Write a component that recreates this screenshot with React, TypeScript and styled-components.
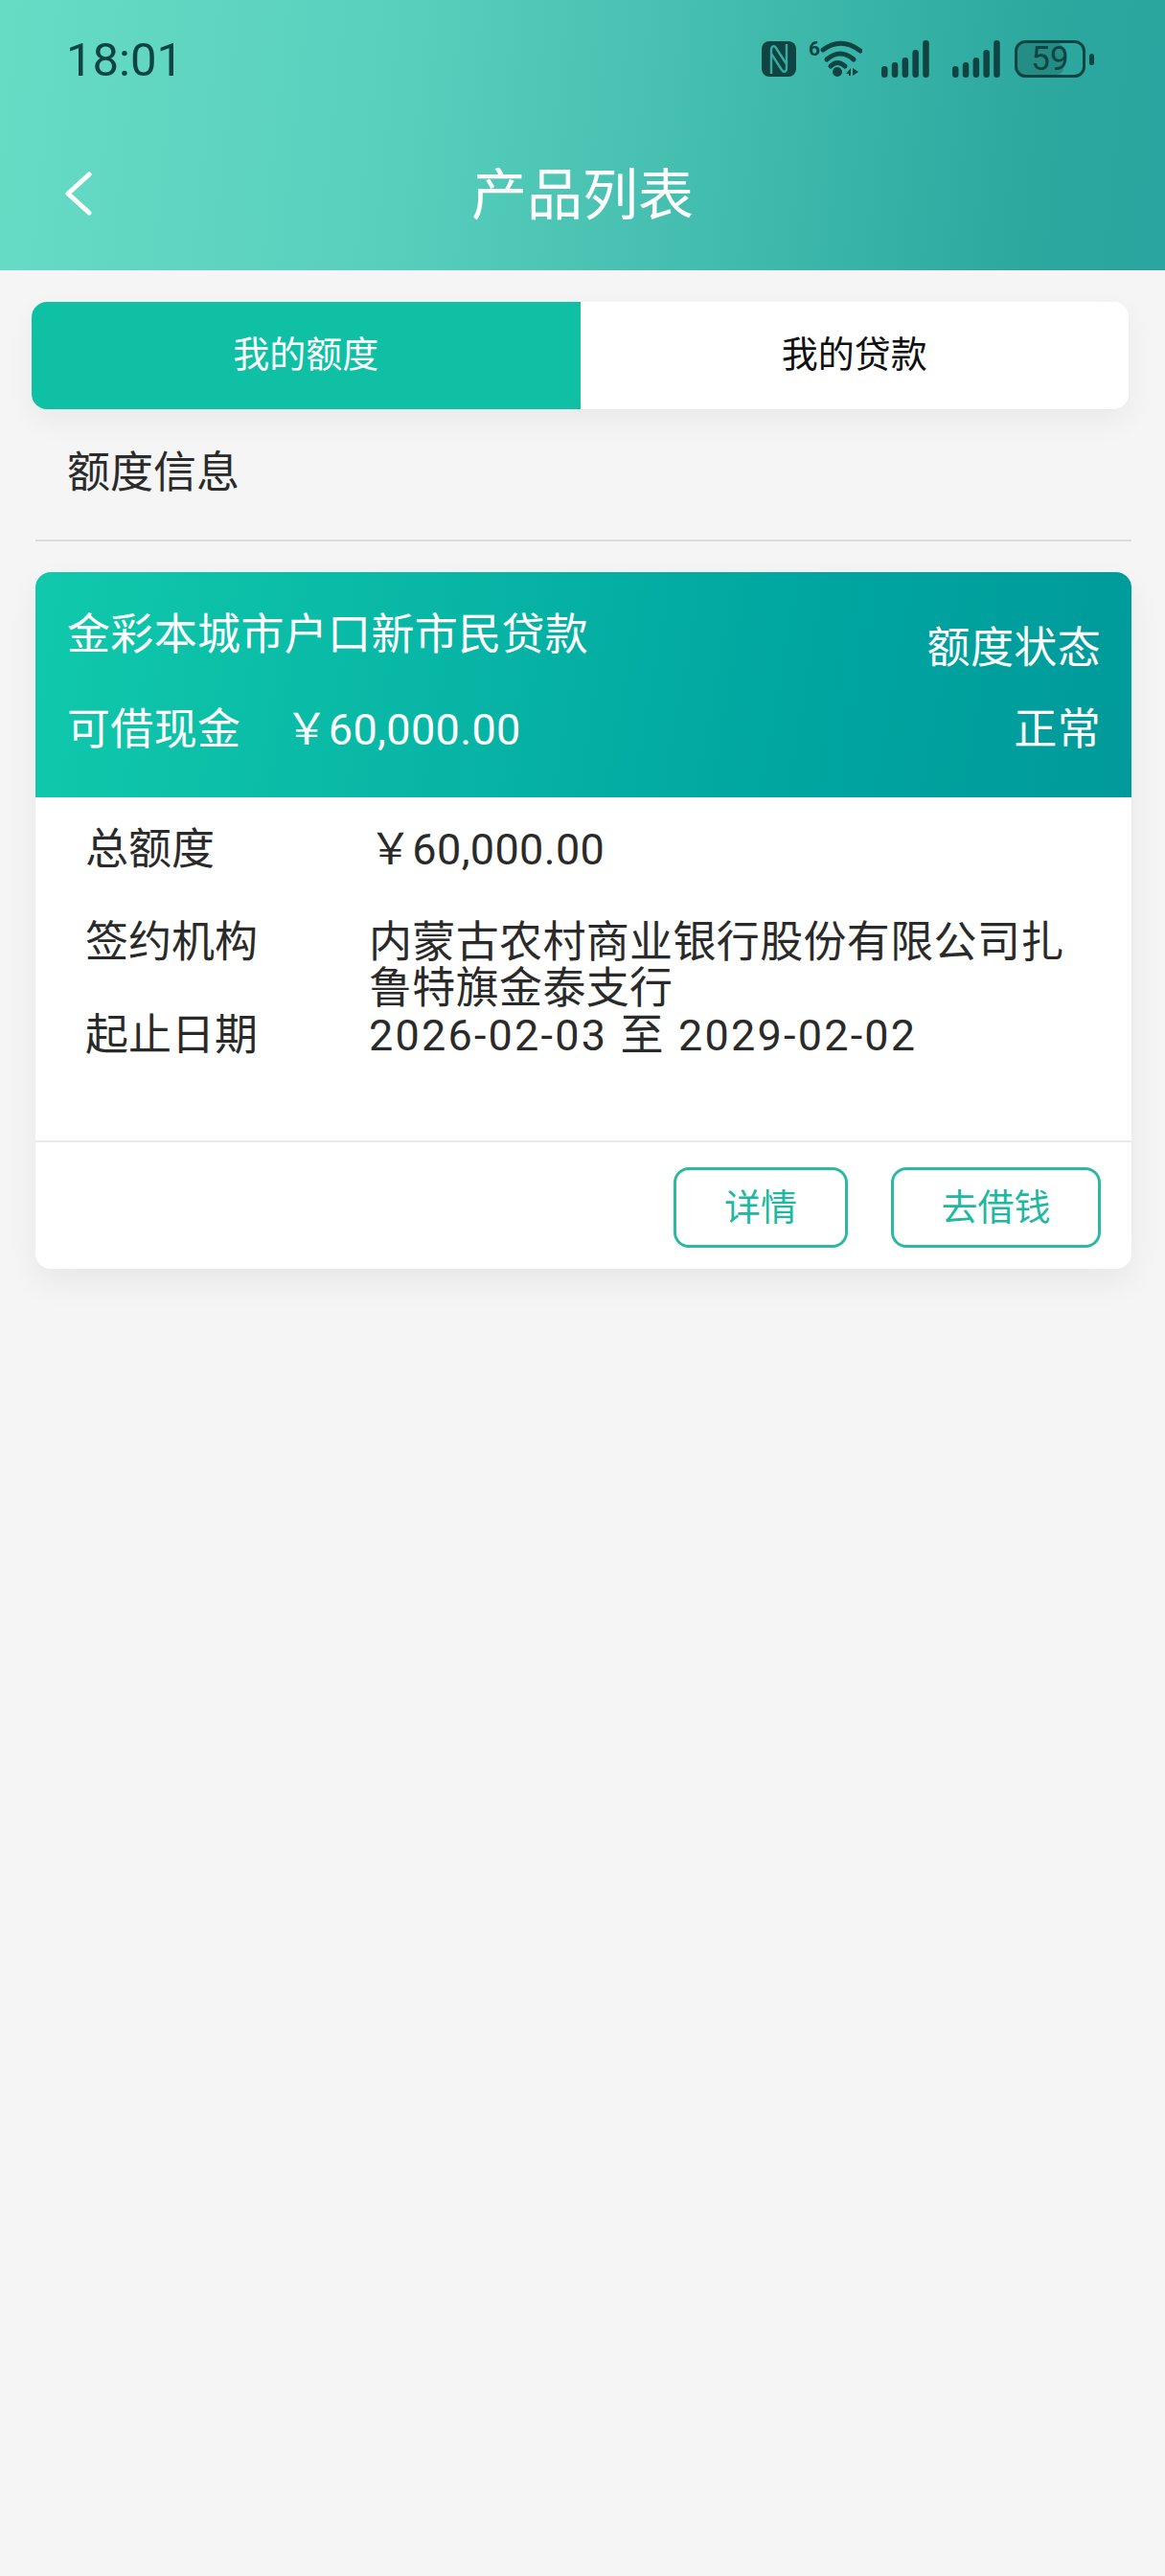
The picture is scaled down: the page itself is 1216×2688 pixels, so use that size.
import React from 'react';
import styled, { createGlobalStyle } from 'styled-components';

const GlobalStyle = createGlobalStyle`
  html, body {
    margin: 0;
    padding: 0;
    background: #f5f5f5;
  }
  * {
    box-sizing: border-box;
  }
  body {
    font-family: Roboto, "Noto Sans CJK SC", sans-serif;
  }
`;

const STATUS_INK = '#0f4442';
const STATUS_CUT = '#37aaa2';

const SIGNAL_BARS = [12, 16, 21, 29, 39];

const SignalIcon: React.FC = () => (
  <svg width="50" height="39" viewBox="0 0 50 39" fill={STATUS_INK}>
    {SIGNAL_BARS.map((h, i) => (
      <rect key={i} x={i * 10.8} y={39 - h} width="6.5" height={h} rx="3.25" />
    ))}
  </svg>
);

const NfcIcon: React.FC = () => (
  <svg width="36" height="37" viewBox="0 0 36 37">
    <rect width="36" height="37" rx="8" fill={STATUS_INK} />
    <path d="M10 34V9C10 5 13 4 15 7L26 24" fill="none" stroke={STATUS_CUT} strokeWidth="2.4" />
    <path d="M26 3V28C26 32 23 33 21 30L10 13" fill="none" stroke={STATUS_CUT} strokeWidth="2.4" />
  </svg>
);

const WifiIcon: React.FC = () => (
  <IconStack>
    <WifiBadge>6</WifiBadge>
    <svg width="56" height="40" viewBox="0 0 56 40" fill="none" stroke={STATUS_INK} strokeLinecap="round">
      <path d="M15 11Q34 -3 54 12" strokeWidth="5" />
      <path d="M19 21Q33 9 47 21" strokeWidth="5" />
      <path d="M23 28Q30 21 38 28" strokeWidth="5" />
      <circle cx="30" cy="34" r="5" fill={STATUS_INK} stroke="none" />
      <path d="M39 36L44 30V38H42V36ZM46 30L52 34L46 38Z" fill={STATUS_INK} stroke="none" />
    </svg>
  </IconStack>
);

const BatteryIcon: React.FC = () => (
  <IconStack>
    <svg width="83" height="39" viewBox="0 0 83 39">
      <rect x="3" y="3" width="48" height="33" rx="7" fill={STATUS_INK} opacity="0.28" />
      <rect x="1.5" y="1.5" width="71" height="36" rx="10" fill="none" stroke={STATUS_INK} strokeWidth="3" />
      <rect x="78" y="14" width="5" height="12" rx="2.5" fill={STATUS_INK} />
    </svg>
    <BatteryLabel>59</BatteryLabel>
  </IconStack>
);

const BackIcon: React.FC = () => (
  <svg width="28" height="46" viewBox="0 0 28 46" fill="none" stroke="#ffffff" strokeWidth="5" strokeLinecap="round" strokeLinejoin="round">
    <path d="M25 3L3 23L25 43" />
  </svg>
);

const App: React.FC = () => {
  return (
    <Page>
      <GlobalStyle />
      <Header>
        <StatusBar>
          <Clock>18:01</Clock>
          <StatusIcons>
            <StatusSlot $gap={0}>
              <NfcIcon />
            </StatusSlot>
            <StatusSlot $gap={13}>
              <WifiIcon />
            </StatusSlot>
            <StatusSlot $gap={20}>
              <SignalIcon />
            </StatusSlot>
            <StatusSlot $gap={24}>
              <SignalIcon />
            </StatusSlot>
            <StatusSlot $gap={15}>
              <BatteryIcon />
            </StatusSlot>
          </StatusIcons>
        </StatusBar>
        <NavBar>
          <BackButton>
            <BackIcon />
          </BackButton>
          <NavTitle>产品列表</NavTitle>
        </NavBar>
      </Header>

      <Tabs>
        <Tab $active>我的额度</Tab>
        <Tab>我的贷款</Tab>
      </Tabs>

      <SectionTitle>额度信息</SectionTitle>

      <Card>
        <CardHead>
          <HeadLeft>
            <HeadText>金彩本城市户口新市民贷款</HeadText>
            <CashRow>
              <HeadText>可借现金</HeadText>
              <HeadText>￥60,000.00</HeadText>
            </CashRow>
          </HeadLeft>
          <HeadRight>
            <HeadText>额度状态</HeadText>
            <HeadText>正常</HeadText>
          </HeadRight>
        </CardHead>

        <CardBody>
          <InfoRow $gap={49}>
            <InfoLabel>总额度</InfoLabel>
            <InfoValue>￥60,000.00</InfoValue>
          </InfoRow>
          <InfoRow $gap={1}>
            <InfoLabel>签约机构</InfoLabel>
            <InfoValue>内蒙古农村商业银行股份有限公司扎鲁特旗金泰支行</InfoValue>
          </InfoRow>
          <InfoRow $gap={0}>
            <InfoLabel>起止日期</InfoLabel>
            <InfoValue $tracking={2.2}>2026-02-03 至 2029-02-02</InfoValue>
          </InfoRow>
        </CardBody>

        <CardFooter>
          <ActionButton $width={182}>详情</ActionButton>
          <ActionButton $width={219}>去借钱</ActionButton>
        </CardFooter>
      </Card>
    </Page>
  );
};

const Page = styled.div`
  width: 1216px;
  height: 2688px;
  overflow: hidden;
  background: #f5f5f5;
`;

const Header = styled.header`
  height: 282px;
  background: linear-gradient(96deg, #66dcc5 0%, #58cfbd 35%, #42bcae 62%, #2ca89f 88%, #2aa59f 100%);
  display: flex;
  flex-direction: column;
`;

const StatusBar = styled.div`
  height: 124px;
  padding: 0 74px 2px 69px;
  display: flex;
  align-items: center;
  justify-content: space-between;
`;

const Clock = styled.span`
  padding-top: 3px;
  font-size: 49px;
  line-height: 60px;
  color: ${STATUS_INK};
`;

const StatusIcons = styled.div`
  display: flex;
  align-items: center;
`;

const StatusSlot = styled.div<{ $gap: number }>`
  display: flex;
  margin-left: ${(p) => p.$gap}px;
`;

const IconStack = styled.div`
  position: relative;
  display: flex;
`;

const WifiBadge = styled.span`
  position: absolute;
  left: 0;
  top: 0;
  font-size: 21px;
  font-weight: 700;
  line-height: 20px;
  color: ${STATUS_INK};
`;

const BatteryLabel = styled.span`
  position: absolute;
  left: 0;
  top: 0;
  width: 74px;
  height: 39px;
  text-align: center;
  font-size: 35px;
  line-height: 40px;
  color: ${STATUS_INK};
`;

const NavBar = styled.div`
  position: relative;
  height: 158px;
  display: flex;
  align-items: center;
  justify-content: center;
  padding-top: 2px;
`;

const BackButton = styled.div`
  position: absolute;
  left: 68px;
  top: 55px;
  display: flex;
`;

const NavTitle = styled.h1`
  margin: 0;
  font-size: 58px;
  font-weight: 400;
  line-height: 70px;
  color: #ffffff;
`;

const Tabs = styled.div`
  margin: 33px 38px 0 33px;
  height: 112px;
  display: flex;
  border-radius: 16px;
  overflow: hidden;
  background: #ffffff;
  box-shadow: 0 12px 30px rgba(0, 0, 0, 0.05);
`;

const Tab = styled.div<{ $active?: boolean }>`
  flex: 1;
  display: flex;
  align-items: center;
  justify-content: center;
  padding-bottom: 10px;
  font-size: 38px;
  background: ${(p) => (p.$active ? '#0fc0a5' : '#ffffff')};
  color: ${(p) => (p.$active ? '#ffffff' : '#111111')};
`;

const SectionTitle = styled.div`
  margin: 0 35px 0 37px;
  padding: 39px 0 41px 33px;
  font-size: 45px;
  line-height: 56px;
  color: #2b2b2b;
  border-bottom: 2px solid #dddddd;
`;

const Card = styled.section`
  margin: 32px 35px 0 37px;
  height: 727px;
  border-radius: 16px;
  overflow: hidden;
  background: #ffffff;
  box-shadow: 0 14px 34px rgba(0, 0, 0, 0.06);
  display: flex;
  flex-direction: column;
`;

const CardHead = styled.div`
  height: 235px;
  padding: 38px 32px 0 33px;
  display: flex;
  justify-content: space-between;
  background: linear-gradient(100deg, #10c9ab 0%, #00a5a0 70%, #009a9a 100%);
`;

const HeadLeft = styled.div`
  display: flex;
  flex-direction: column;
  gap: 43px;
`;

const HeadRight = styled.div`
  display: flex;
  flex-direction: column;
  align-items: flex-end;
  gap: 29px;
  padding-top: 14px;
`;

const HeadText = styled.span`
  font-size: 45px;
  line-height: 56px;
  letter-spacing: 0.35px;
  color: #ffffff;
  white-space: nowrap;
`;

const CashRow = styled.div`
  display: flex;
  gap: 46px;
`;

const CardBody = styled.div`
  flex: 1;
  padding: 31px 60px 0 52px;
`;

const InfoRow = styled.div<{ $gap: number }>`
  display: grid;
  grid-template-columns: 296px 1fr;
  margin-bottom: ${(p) => p.$gap}px;
`;

const InfoLabel = styled.span`
  font-size: 45px;
  line-height: 48px;
  color: #2a2a2a;
`;

const InfoValue = styled.span<{ $tracking?: number }>`
  font-size: 45px;
  line-height: 48px;
  letter-spacing: ${(p) => p.$tracking ?? 0.35}px;
  color: #2a2a2a;
`;

const CardFooter = styled.div`
  height: 134px;
  padding: 26px 32px 0 0;
  border-top: 2px solid #e9e9e9;
  display: flex;
  justify-content: flex-end;
  gap: 45px;
`;

const ActionButton = styled.div<{ $width: number }>`
  width: ${(p) => p.$width}px;
  height: 84px;
  padding-bottom: 8px;
  border: 3px solid #2cb8a3;
  border-radius: 16px;
  display: flex;
  align-items: center;
  justify-content: center;
  font-size: 38px;
  color: #1fb8a1;
`;

export default App;
